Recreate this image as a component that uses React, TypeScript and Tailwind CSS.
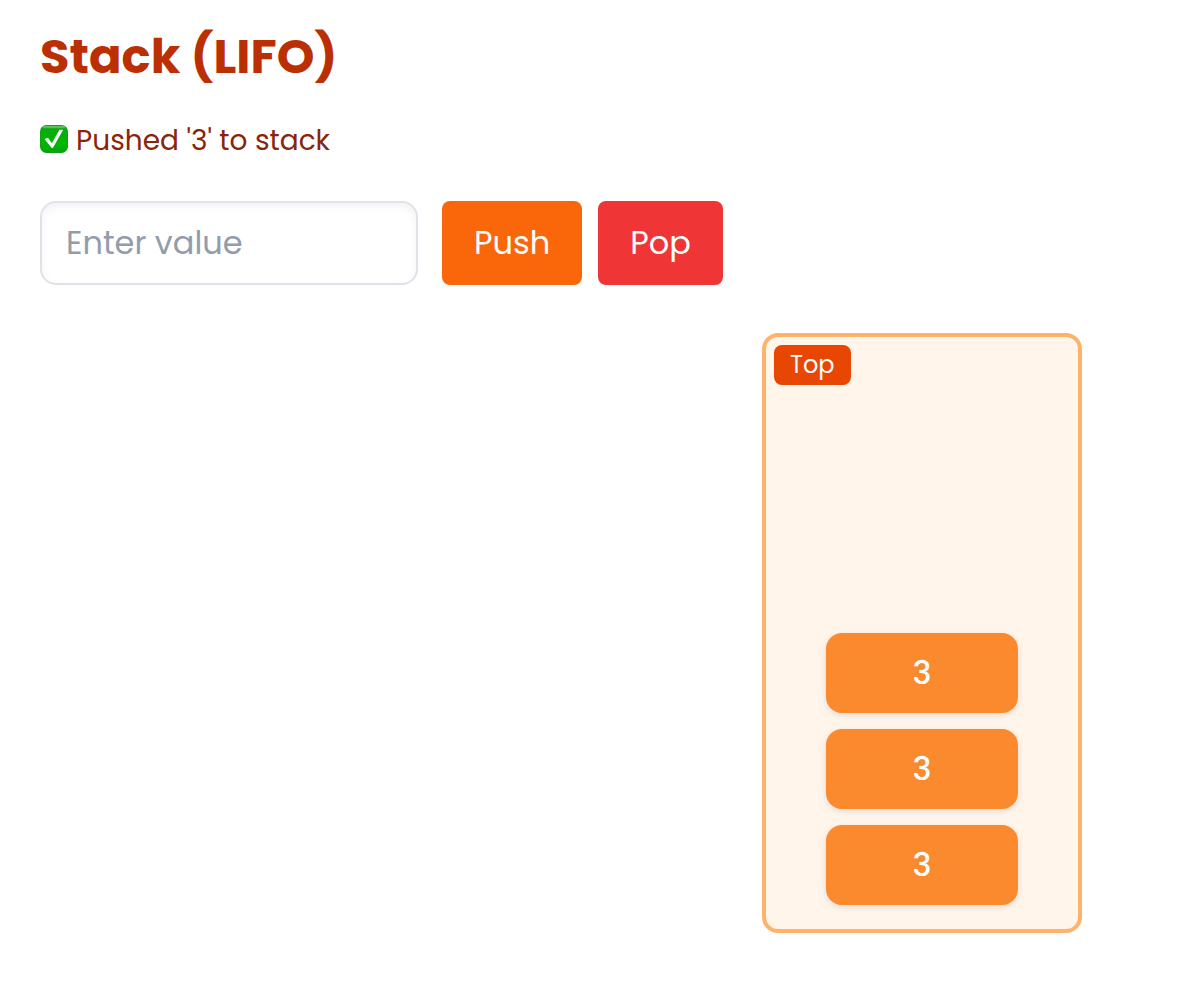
import { useState } from "react";
import type { FormEvent } from "react";

function CheckMark() {
  return (
    <svg viewBox="0 0 28 28" className="mt-1 size-7 shrink-0 self-start" role="img" aria-label="Success">
      <defs>
        <linearGradient id="check-fill" x1="0" y1="0" x2="0" y2="1">
          <stop offset="0" stopColor="#1a9f20" />
          <stop offset="0.2" stopColor="#08ad0c" />
          <stop offset="0.65" stopColor="#00b800" />
          <stop offset="1" stopColor="#06a50b" />
        </linearGradient>
        <linearGradient id="check-gloss" x1="0" y1="0" x2="0" y2="1">
          <stop offset="0" stopColor="#7fd680" />
          <stop offset="1" stopColor="#22b026" />
        </linearGradient>
      </defs>
      <rect width="28" height="28" rx="6.5" fill="#149a1c" />
      <rect x="0.7" y="0.7" width="26.6" height="26.6" rx="5.8" fill="url(#check-fill)" />
      <rect x="3" y="1.2" width="22" height="2.4" rx="1.2" fill="url(#check-gloss)" />
      <path
        d="M20 4.700h2.600c.4 0 .5.3.3.6L13.300 22.300c-.5.800-1.700.800-2.200 0L4.900 14.500c-.3-.4-.2-.7.2-.8l2.500-.6c.4-.1.700 0 .9.400l3.400 4.700L19.200 5.200c.2-.4.400-.5.8-.5z"
        fill="#fff"
      />
    </svg>
  );
}

export default function App() {
  const [items, setItems] = useState<string[]>(["3", "3", "3"]);
  const [value, setValue] = useState("");
  const [message, setMessage] = useState("Pushed '3' to stack");

  function push(event: FormEvent) {
    event.preventDefault();
    if (!value.trim()) return;
    setItems([value, ...items]);
    setMessage(`Pushed '${value}' to stack`);
    setValue("");
  }

  function pop() {
    if (!items.length) return;
    setMessage(`Popped '${items[0]}' from stack`);
    setItems(items.slice(1));
  }

  return (
    <main className="min-h-screen bg-white px-10 pt-[25px] pb-12 font-['Poppins','Inter',sans-serif]">
      <h1 className="text-5xl leading-16 font-bold text-[#bb2f04]">Stack (LIFO)</h1>
      <p className="mt-8 flex items-center gap-2 text-[28px] leading-10 text-[#8a240a]">
        <CheckMark />
        {message}
      </p>
      <form onSubmit={push} className="mt-10 flex flex-wrap items-center gap-4">
        <input
          type="text"
          aria-label="Value"
          placeholder="Enter value"
          value={value}
          onChange={(event) => setValue(event.target.value)}
          className="mr-2 h-21 w-[378px] rounded-2xl border-2 border-[#dfe2e8] px-6 text-[32px] shadow-[inset_0_4px_8px_rgba(0,0,0,0.05)] placeholder:text-[#949bab]"
        />
        <button type="submit" className="h-21 rounded-lg bg-[#fa670a] px-8 text-[32px] text-white">
          Push
        </button>
        <button type="button" onClick={pop} className="h-21 rounded-lg bg-[#ef3535] px-8 text-[32px] text-white">
          Pop
        </button>
      </form>
      <div className="mt-12 flex justify-end pr-18">
        <section aria-label="Stack" className="relative flex min-h-[600px] w-80 flex-col items-center justify-end gap-4 rounded-2xl border-4 border-[#ffb269] bg-[#fff5ea] pt-14 pb-6">
          <span className="absolute top-2 left-2 rounded-lg bg-[#e84603] px-4 py-1 text-2xl leading-8 text-white">
            Top
          </span>
          {items.map((item, index) => (
            <div
              key={items.length - index}
              className="flex h-20 w-48 items-center justify-center rounded-2xl bg-[#fb892d] text-[32px] font-medium text-white shadow-[0_2px_6px_rgba(0,0,0,0.12)]"
            >
              {item}
            </div>
          ))}
        </section>
      </div>
    </main>
  );
}
